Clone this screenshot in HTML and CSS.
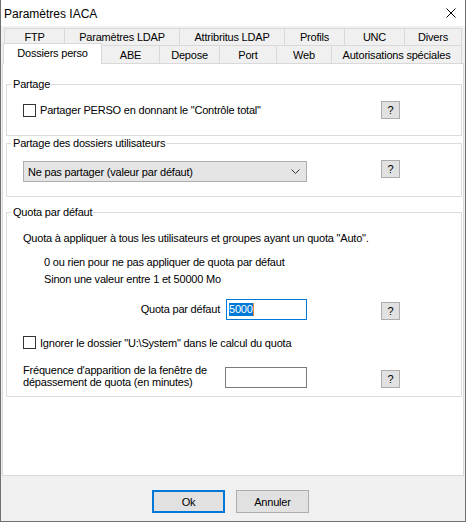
FILE: index.html
```html
<!DOCTYPE html>
<html>
<head>
  <meta charset="UTF-8">
  <title>Paramètres IACA</title>
  <link rel="stylesheet" href="styles.css">
</head>
<body>
  <div class="window">
    <div class="titlebar">
      <span class="title">Paramètres IACA</span>
      <svg class="close" width="10" height="10" viewBox="0 0 10 10">
        <path d="M0.5 0.5 L9.5 9.5 M9.5 0.5 L0.5 9.5" stroke="#000" stroke-width="1" fill="none"/>
      </svg>
    </div>

    <div class="tabs">
      <div class="tab-row row-back">
        <div class="tab">FTP</div>
        <div class="tab">Paramètres LDAP</div>
        <div class="tab">Attribritus LDAP</div>
        <div class="tab">Profils</div>
        <div class="tab">UNC</div>
        <div class="tab">Divers</div>
      </div>
      <div class="tab-row row-front">
        <div class="tab active">Dossiers perso</div>
        <div class="tab">ABE</div>
        <div class="tab">Depose</div>
        <div class="tab">Port</div>
        <div class="tab">Web</div>
        <div class="tab">Autorisations spéciales</div>
      </div>
    </div>

    <div class="panel">
      <div class="group g1">
        <span class="caption">Partage</span>
        <div class="row row-share">
          <span class="check"></span>
          <span>Partager PERSO en donnant le "Contrôle total"</span>
          <span class="help">?</span>
        </div>
      </div>

      <div class="group g2">
        <span class="caption">Partage des dossiers utilisateurs</span>
        <div class="row row-select">
          <div class="select">
            <span>Ne pas partager (valeur par défaut)</span>
            <svg width="9" height="5" viewBox="0 0 9 5">
              <polyline points="0.5,0.5 4.5,4.5 8.5,0.5" stroke="#333" stroke-width="1" fill="none"/>
            </svg>
          </div>
          <span class="help">?</span>
        </div>
      </div>

      <div class="group g3">
        <span class="caption">Quota par défaut</span>
        <div class="intro">Quota à appliquer à tous les utilisateurs et groupes ayant un quota "Auto".</div>
        <div class="note">
          0 ou rien pour ne pas appliquer de quota par défaut<br>
          Sinon une valeur entre 1 et 50000 Mo
        </div>
        <div class="row row-quota">
          <span class="field-label quota-label">Quota par défaut</span>
          <div class="field focused"><span class="selected">5000</span></div>
          <span class="help">?</span>
        </div>
        <div class="row row-ignore">
          <span class="check"></span>
          <span>Ignorer le dossier "U:\System" dans le calcul du quota</span>
        </div>
        <div class="row row-freq">
          <span class="field-label freq-label">Fréquence d'apparition de la fenêtre de<br>dépassement de quota (en minutes)</span>
          <div class="field"></div>
          <span class="help">?</span>
        </div>
      </div>
    </div>

    <div class="actions">
      <button class="btn default">Ok</button>
      <button class="btn">Annuler</button>
    </div>
  </div>
</body>
</html>
```

FILE: styles.css
```css
body {
  margin: 0;
  background: #ffffff;
}
.window {
  width: 466px;
  height: 522px;
  box-sizing: border-box;
  border: 1px solid #707070;
  border-top: none;
  background: #f0f0f0;
  font-family: "Liberation Sans", Arial, sans-serif;
  font-size: 11px;
  letter-spacing: -0.2px;
  color: #000;
  display: flex;
  flex-direction: column;
}
.titlebar {
  height: 26px;
  flex: none;
  background: #fff;
  display: flex;
  align-items: center;
  justify-content: space-between;
  padding: 0 9px 0 3px;
  font-size: 12px;
  letter-spacing: 0;
}
.title {
  margin-top: 1px;
}

/* tabs */
.tabs {
  margin: 2px 1px 0 1px;
}
.tab-row {
  display: grid;
}
.row-back {
  grid-template-columns: 60px 115px 105px 60px 60px 58px;
  height: 17px;
  margin-left: 2px;
}
.row-front {
  grid-template-columns: 98px 58px 60px 57px 55px 131px;
  height: 18px;
  margin-left: 1px;
}
.tab {
  border: 1px solid #d9d9d9;
  border-right: none;
  border-bottom: none;
  background: #f0f0f0;
  text-align: center;
  line-height: 16px;
  white-space: nowrap;
}
.row-front .tab {
  padding-top: 1px;
}
.tab:last-child {
  border-right: 1px solid #d9d9d9;
}
.tab.active {
  position: relative;
  z-index: 1;
  background: #fff;
  margin: -2px -1px -1px 0;
  border-right: 1px solid #d9d9d9;
  padding-top: 1px;
}

/* panel */
.panel {
  flex: none;
  height: 413px;
  margin: 0 1px;
  box-sizing: border-box;
  background: #fff;
  border: 1px solid #d9d9d9;
  padding: 0 1px 0 3px;
}
.group {
  border: 1px solid #dcdcdc;
  box-sizing: border-box;
}
.g1 {
  margin-top: 20px;
  height: 52px;
}
.g2 {
  margin-top: 7px;
  height: 54px;
}
.g3 {
  margin-top: 15px;
  height: 185px;
}
.caption {
  display: table;
  margin: -7px 0 0 4px;
  padding: 0 1px 0 2px;
  background: #fff;
  line-height: 13px;
}
.row {
  display: flex;
  align-items: center;
  padding: 0 61px 0 16px;
}
.help {
  margin-left: auto;
  width: 19px;
  height: 18px;
  box-sizing: border-box;
  border: 1px solid #adadad;
  background: #e1e1e1;
  text-align: center;
  line-height: 16px;
}
.check {
  width: 13px;
  height: 13px;
  box-sizing: border-box;
  border: 1px solid #333;
  background: #fff;
  margin-right: 4px;
  flex: none;
}

.row-share {
  margin-top: 10px;
  height: 18px;
}
.row-select {
  margin-top: 10px;
  align-items: flex-start;
}
.select {
  width: 284px;
  height: 21px;
  margin-top: 1px;
  box-sizing: border-box;
  border: 1px solid #adadad;
  background: #e5e5e5;
  display: flex;
  align-items: center;
  justify-content: space-between;
  padding: 0 6px 0 4px;
}

.intro {
  margin-top: 13px;
  padding-left: 16px;
  line-height: 13px;
}
.note {
  margin-top: 9px;
  padding-left: 37px;
  line-height: 17px;
}
.row-quota {
  margin-top: 11px;
  align-items: flex-end;
}
.field-label {
  flex: none;
}
.quota-label {
  width: 197px;
  text-align: right;
  line-height: 13px;
  align-self: center;
  margin-right: 6px;
}
.field {
  width: 81px;
  height: 21px;
  box-sizing: border-box;
  border: 1px solid #7a7a7a;
  background: #fff;
  padding: 3px 0 0 2px;
  line-height: 13px;
}
.field.focused {
  border-color: #0078d7;
}
.selected {
  display: inline-block;
  background: #0078d7;
  color: #fff;
  border-right: 1px solid #e8883a;
}
.row-ignore {
  margin-top: 16px;
  height: 13px;
}
.row-freq {
  margin-top: 15px;
  align-items: flex-end;
}
.freq-label {
  width: 202px;
  line-height: 12px;
}
.row-freq .field {
  width: 82px;
}

/* bottom buttons */
.actions {
  display: flex;
  justify-content: center;
  gap: 11px;
  margin-top: 14px;
  padding-right: 5px;
}
.btn {
  width: 73px;
  height: 23px;
  box-sizing: border-box;
  border: 1px solid #adadad;
  background: #e1e1e1;
  font-family: "Liberation Sans", Arial, sans-serif;
  font-size: 11px;
  letter-spacing: -0.2px;
  color: #000;
  padding: 0;
}
.btn.default {
  border: 2px solid #0078d7;
}
```
